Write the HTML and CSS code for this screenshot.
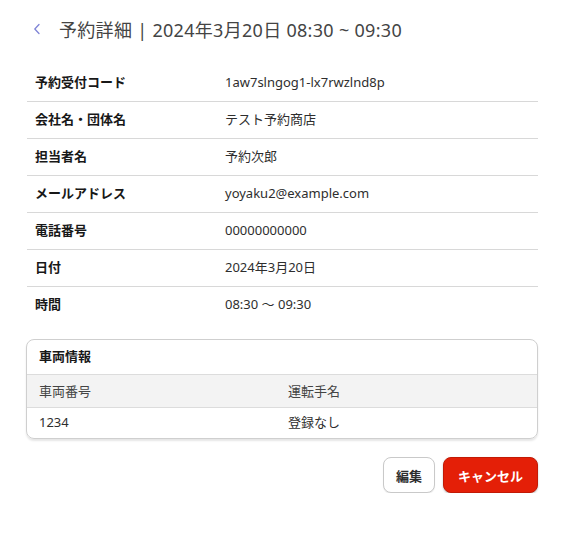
FILE: index.html
```html
<!DOCTYPE html>
<html lang="ja">
<head>
    <meta charset="UTF-8">
    <meta name="viewport" content="width=device-width, initial-scale=1.0">
    <title>予約詳細</title>
    <link rel="stylesheet" href="styles.css">
</head>
<body>
    <main class="page">
        <div class="header">
            <a class="back" href="#" aria-label="戻る">
                <svg width="8" height="12" viewBox="0 0 8 12"><path d="M6 1.5 L1.8 6 L6 10.5" fill="none" stroke="#7f84d6" stroke-width="1.3" stroke-linecap="round" stroke-linejoin="round"/></svg>
            </a>
            <h1 class="title">予約詳細 | 2024年3月20日 08:30 ~ 09:30</h1>
        </div>

        <table class="detail">
            <tr><th>予約受付コード</th><td>1aw7slngog1-lx7rwzlnd8p</td></tr>
            <tr><th>会社名・団体名</th><td>テスト予約商店</td></tr>
            <tr><th>担当者名</th><td>予約次郎</td></tr>
            <tr><th>メールアドレス</th><td>yoyaku2@example.com</td></tr>
            <tr><th>電話番号</th><td>00000000000</td></tr>
            <tr><th>日付</th><td>2024年3月20日</td></tr>
            <tr><th>時間</th><td>08:30 〜 09:30</td></tr>
        </table>

        <div class="card">
            <div class="card-title">車両情報</div>
            <div class="grid-row grid-head">
                <span>車両番号</span>
                <span>運転手名</span>
            </div>
            <div class="grid-row">
                <span>1234</span>
                <span>登録なし</span>
            </div>
        </div>

        <div class="actions">
            <button class="btn">編集</button>
            <button class="btn btn-danger">キャンセル</button>
        </div>
    </main>
</body>
</html>
```

FILE: styles.css
```css
body {
    font-family: 'Noto Sans', 'Noto Sans CJK JP', sans-serif;
    margin: 0;
    padding: 0;
    background-color: #fff;
    color: #2e2e2e;
    font-size: 13px;
}

.page {
    width: 511px;
    margin-left: 27px;
    padding-top: 12px;
}

.header {
    display: flex;
    align-items: center;
    height: 34px;
}

.back {
    display: flex;
    align-items: center;
    width: 32px;
    padding-left: 6px;
    box-sizing: border-box;
}

.title {
    margin: 0;
    font-size: 18px;
    font-weight: 400;
    color: #444;
    letter-spacing: 0.3px;
}

.detail {
    width: 100%;
    margin-top: 19px;
    border-collapse: collapse;
}

.detail th,
.detail td {
    padding: 9px 8px 10px;
    line-height: 17px;
    text-align: left;
    vertical-align: middle;
    border-bottom: 1px solid #d8d8d8;
}

.detail tr:last-child th,
.detail tr:last-child td {
    border-bottom: none;
}

.detail th {
    width: 174px;
    font-weight: 700;
    color: #181818;
}

.card {
    margin-top: 16px;
    margin-left: -1px;
    border: 1px solid #cfcfcf;
    border-radius: 8px;
    box-shadow: 0 2px 2px rgba(0, 0, 0, 0.1);
    overflow: hidden;
}

.card-title {
    height: 34px;
    padding: 0 12px 4px;
    box-sizing: border-box;
    display: flex;
    align-items: center;
    font-weight: 700;
    color: #181818;
}

.grid-row {
    display: grid;
    grid-template-columns: 249px 1fr;
    height: 31px;
    align-items: center;
    padding: 0 12px 3px;
    box-sizing: border-box;
    border-top: 1px solid #dcdcdc;
}

.grid-head {
    height: 33px;
    padding-bottom: 2px;
    background-color: #f3f3f3;
    color: #444;
}

.actions {
    display: flex;
    justify-content: flex-end;
    gap: 8px;
    margin-top: 18px;
}

.btn {
    height: 36px;
    padding: 0 12px;
    font-family: inherit;
    font-size: 13px;
    font-weight: 700;
    color: #2e2e2e;
    background: #fff;
    border: 1px solid #c9c9c9;
    border-radius: 8px;
    box-shadow: 0 1px 1px rgba(0, 0, 0, 0.08);
    cursor: pointer;
}

.btn-danger {
    padding: 0 14px;
    color: #fff;
    background-color: #e41f07;
    border-color: #c21a05;
    box-shadow: 0 1px 2px rgba(0, 0, 0, 0.25);
}
```
